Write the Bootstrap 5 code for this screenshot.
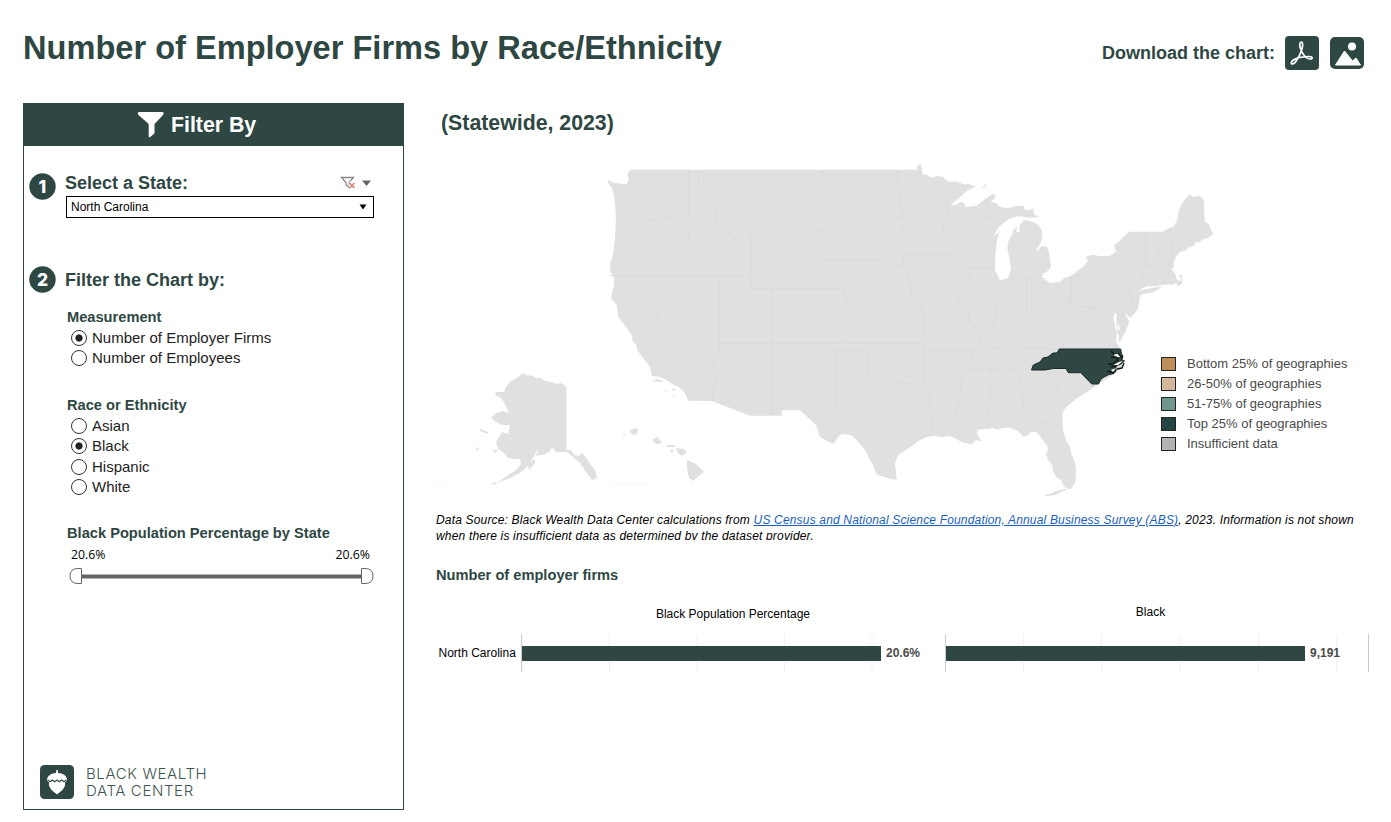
<!DOCTYPE html>
<html lang="en">
<head>
<meta charset="utf-8">
<meta name="viewport" content="width=device-width, initial-scale=1">
<title>Number of Employer Firms by Race/Ethnicity</title>
<link href="https://cdn.jsdelivr.net/npm/bootstrap@5.3.0/dist/css/bootstrap.min.css" rel="stylesheet">
<style>
:root{--pine:#2e4743}
body{font-family:"Liberation Sans",Arial,sans-serif;color:#000;background:#fff;width:1391px;height:822px;overflow:hidden;line-height:1}
svg{display:block;flex:none}
.pine{color:var(--pine)}
.topbar{height:103px;padding:0 27px 0 23px}
.topbar h1{font-size:32.6px;font-weight:700;margin:31px 0 0;line-height:33px}
.downloads{height:34px;margin-top:36px;font-size:18px;font-weight:700}
.filters{width:381px;height:707px;margin-left:23px;border:1px solid var(--pine)}
.filters-head{height:42px;background:var(--pine);color:#fff;font-size:21.3px;font-weight:700;padding-left:113px}
.step{height:27px;padding-left:5px;font-size:18px;font-weight:700}
.state-select{margin-left:42px;width:308px;height:22px;border:1px solid #000;font-size:12px;padding:0 6px 0 4px}
.group{margin-left:43px}
.group h2{font-size:14.65px;font-weight:700;line-height:16px;margin:0}
.choice{height:20.5px;font-size:15px;line-height:15px;color:#222;gap:5px;padding-left:4px}
.choice input{appearance:none;width:16px;height:16px;border:1px solid #333;border-radius:50%;margin:0;background:#fff}
.choice input:checked{background:radial-gradient(circle,#222 3.2px,#fff 4px)}
.choice span{padding-bottom:1px}
.ends{width:303px;font:12.3px/14px "Open Sans",sans-serif;padding-left:4px}
.logo-text{font-family:Inter,sans-serif;font-weight:300;font-size:15px;line-height:17px;color:#3f5551;letter-spacing:.62px}
.content{width:933px;margin-left:32px}
.content h2{font-size:21.3px;font-weight:700;line-height:22px;margin:9px 0 0 5px}
.mapbox{height:351px;margin-top:16px}
.legend{position:absolute;left:725px;top:204px;font-size:13px;color:#4a4a4a}
.legend div{height:19.9px;gap:11px}
.legend i{width:15px;height:14px;border:1.5px solid #222}
.note{font-size:12px;font-style:italic;line-height:16px;height:28px;margin-top:11px;overflow:hidden;letter-spacing:.172px;white-space:nowrap}
.note a{color:#1b5fb8}
.content h3{font-size:14.65px;font-weight:700;line-height:16px;margin:27px 0 0}
.chart{display:grid;grid-template-columns:85px 424px 424px;grid-template-rows:51px 38px;font-size:12px}
.plot{border-left:1px solid #ccc}
.plot b{color:#4a4a4a;margin-left:5px}
.bar{height:15px;width:359px;background:var(--pine)}
.p1{background:linear-gradient(90deg,#f0f0f0 1px,transparent 1px) 87px 0/87.5px 100%}
.p2{background:linear-gradient(90deg,#f0f0f0 1px,transparent 1px) 77px 0/78.3px 100%;border-right:1px solid #ccc}
</style>
</head>
<body>
<header class="topbar d-flex justify-content-between align-items-start">
  <h1 class="pine">Number of Employer Firms by Race/Ethnicity</h1>
  <div class="downloads pine d-flex align-items-center">
    <span>Download the chart:</span>
    <svg class="ms-2" width="36" height="34" viewBox="0 0 36 34"><rect x="2" width="34" height="34" rx="4" fill="#2e4743"/><path d="M17.500 6.500c2.500-1.500 2.500 3 1.500 6.500-1.500 5-4 9.500-6.500 13-1.500 2.200-4.500 2.500-4.300.8.300-2.800 6.300-5 11.300-5.800 4.500-.7 9.500-.9 9.700.8s-4 1.700-6.700-.8c-4.500-4.500-7-12.500-5-14.500Z" fill="none" stroke="#fff" stroke-width="1.700"/></svg>
    <svg class="ms-2" width="37" height="32" viewBox="0 0 37 32"><rect x="3" width="34" height="32" rx="5" fill="#2e4743"/><circle cx="25" cy="9.500" r="4" fill="#fff"/><path d="m8.500 28 9-14 8 10 3.500-3 4.500 7Z" fill="#fff" stroke="#fff" stroke-linejoin="round"/></svg>
  </div>
</header>
<div class="d-flex">
<aside class="filters d-flex flex-column">
  <div class="filters-head d-flex align-items-center">
    <svg width="28" height="28" viewBox="0 0 28 28"><path d="M1.500 1h24.500q1.500 1.500 0 3l-8.500 9v9.500l-5 4q-.8 0-.8-1.500V13L1.500 4Q0 2 1.500 1Z" fill="#fff"/></svg>
    <span style="margin:2px 0 0 6px">Filter By</span>
  </div>
  <div class="step pine d-flex" style="margin-top:27px">
    <svg width="27" height="27" viewBox="0 0 27 27"><circle cx="13.500" cy="13.500" r="13.200" fill="#2e4743"/><text x="13.300" y="19.700" text-anchor="middle" fill="#fff" font-family="Inter" font-weight="800" font-size="17.500">1</text></svg>
    <span style="margin:1px 0 0 9px">Select a State:</span>
    <svg style="margin:2px 0 0 152px" width="34" height="16" viewBox="0 0 34 16"><path d="M1.500 2.500h12L9 7.500v5L6 10V7.500Z" fill="none" stroke="#888" stroke-width="1.300"/><path d="m9.500 7.500 5.500 5.500m0-5.500L9.500 13" stroke="#fff" stroke-width="4"/><path d="m9.500 8 5 5m0-5-5 5" stroke="#dc7b76" stroke-width="1.600"/><path d="M22 5.500h9l-4.500 5.500Z" fill="#666"/></svg>
  </div>
  <div class="state-select d-flex align-items-center justify-content-between" style="margin-top:-4px"><span>North Carolina</span><svg width="8" height="6" viewBox="0 0 8 6"><path d="M.5.500h7L4 5.500Z"/></svg></div>
  <div class="step pine d-flex" style="margin-top:48px">
    <svg width="27" height="27" viewBox="0 0 27 27"><circle cx="13.500" cy="13.500" r="13.200" fill="#2e4743"/><text x="13.500" y="19.700" text-anchor="middle" fill="#fff" font-family="Inter" font-weight="800" font-size="17.500">2</text></svg>
    <span style="margin:5px 0 0 9px">Filter the Chart by:</span>
  </div>
  <div class="group" style="margin-top:16px">
    <h2 class="pine mb-1">Measurement</h2>
    <label class="choice d-flex align-items-center" style="margin-top:-1.500px"><input type="radio" name="m" checked><span>Number of Employer Firms</span></label>
    <label class="choice d-flex align-items-center"><input type="radio" name="m"><span>Number of Employees</span></label>
  </div>
  <div class="group" style="margin-top:28.500px">
    <h2 class="pine mb-1">Race or Ethnicity</h2>
    <label class="choice d-flex align-items-center" style="margin-top:-1.700px"><input type="radio" name="r"><span>Asian</span></label>
    <label class="choice d-flex align-items-center"><input type="radio" name="r" checked><span>Black</span></label>
    <label class="choice d-flex align-items-center"><input type="radio" name="r"><span>Hispanic</span></label>
    <label class="choice d-flex align-items-center"><input type="radio" name="r"><span>White</span></label>
  </div>
  <div class="group" style="margin-top:27.700px">
    <h2 class="pine">Black Population Percentage by State</h2>
    <div class="ends d-flex justify-content-between" style="margin-top:7px"><span>20.6%</span><span>20.6%</span></div>
    <svg style="margin:6px 0 0 2px" width="305" height="17" viewBox="0 0 305 17"><path d="M12 8.500h281" stroke="#666" stroke-width="4"/><path d="M12.500.500v15H9q-8 0-8-7.500t8-7.500ZM292.500.500v15h3.500q8 0 8-7.500t-8-7.500Z" fill="#fff" stroke="#666"/></svg>
  </div>
  <div class="mt-auto d-flex align-items-center" style="margin:0 0 10px 16px">
    <svg width="34" height="34" viewBox="0 0 34 34"><rect width="34" height="34" rx="4.500" fill="#2e4743"/><path d="M16 8q.5-1 0-2.500l2-.5-.2 3q8 .5 9.200 6l-1 3H8l-1-3q1.500-5.500 9-6Z" fill="#fff"/><path d="M9 16.500h16q1 6.500-5 10.500l-3 2.500-3-2.500q-6-4-5-10.500Z" fill="#fff"/><path d="m8 15 2 1.800 2.300-1.800 2.300 1.800 2.400-1.800 2.300 1.800 2.400-1.800 2.300 1.800 2-1.800" fill="none" stroke="#2e4743" stroke-width="1.100"/></svg>
    <div class="logo-text" style="margin:1px 0 0 12px">BLACK WEALTH<br>DATA CENTER</div>
  </div>
</aside>
<main class="content">
  <h2 class="pine">(Statewide, 2023)</h2>
  <div class="mapbox position-relative">
    <svg width="800" height="350" viewBox="436 150 800 350">
      <g fill="#e0e0e0">
      <path d="M630 169.800H917.300V165L921 164.500 922.700 174.300 927 175 931.700 177.700 937 176 943.300 177 946 180 950 181.700 957 181.500 963.300 184.300 968 184 976 186.300 971 189 966.700 191 960 197 950 205.700 956 204.500 961.700 201.700 964 203 966 207 976.700 205.700 985 199 991.700 194.300 995.700 195 994 199 990.700 201.700 996 203 999 206 1003.300 207.700 1009 208 1015 206 1023.300 205.700 1025 210 1030 210 1033.300 208.300 1034 214.300 1039.300 217 1028.300 217.700 1022 216.500 1016.700 216.300 1010 218.300 1003.300 223.300 998 228 993.300 237 1000 231 997 240 995.300 255 995 270 1000 280.300 1008.300 277.700 1011 268.300 1010 262 1007.300 248.300 1008 242 1011.700 235 1014 229 1017.300 226.700 1016 232 1019.300 232.300 1020 225 1024 220 1033.300 221.700 1038 225 1041.700 230 1042.300 238.300 1040 244 1036 250 1038 251 1041.700 245.700 1046.700 246.700 1049 252 1050 258.300 1051 266.700 1048 271 1043.300 273.300 1041.700 279 1046 280 1050 283 1060 281.700 1064 278 1071.700 275.700 1077 271 1083.300 266.700 1088 261 1085.700 256.700 1092 255 1100 256 1110 255.700 1116 251.700 1114 245.700 1129.300 231.700H1163.300L1167 229 1173.300 226.700 1177 221 1178.300 213.300 1180 207 1183.300 201.700 1189.300 194.300 1193.300 197 1200 195.700 1204 201 1204.700 221.700 1209.300 224.300 1210 228 1213.300 234.300 1208 238 1203 239 1200 242 1196 242 1193.300 246 1189 247 1187 250 1180 251.700 1176 257 1173.300 263.300 1174 266 1171.700 270 1175 273 1177 280 1181 281 1181 278 1179 275 1182 275 1182 284 1178 286 1176 283 1172 285 1166.700 284.300 1157 286 1146.700 286.300 1141 289 1138.300 291 1147 289 1156 287 1162 287 1154 292 1140 295 1139.300 301.700 1137.300 310 1133 315 1130 318.300 1128 315 1125 313.300 1129.300 321.700 1126 330 1121 340 1118 342 1119 336 1117 332 1120 329 1117 322 1117 313 1115 313 1113.300 318.300 1115 325 1116 331.700 1117 337 1116 341 1118 345 1120.700 349.300 1122 368 1114 374 1098.300 384.300 1085 393.300 1076 399 1066.700 406.700 1063 412 1062.300 417.300 1063.300 431.700 1066 440 1070 446.700 1071 453 1075.300 463.300 1076 471 1075.300 481.700 1072 488 1069.300 489.300 1064 486.700 1061 480 1057 478 1053.300 471.700 1052 465 1048 460 1046 454 1048 449 1046.700 445 1042 439 1036.700 431.700 1031 432 1028 435 1023.300 436.700 1020 433 1016 430 1010 427.700 1003 428 997 430 993.300 427.700 989 429 984 429 978 430 977 434 981.700 441.700 976 440 972 444 963.300 442.700 958 440 950 436 942 437 933.300 436 927 437 920 440 912 446 898.300 455 895 463.300 896.700 480 887 478 876.700 474.300 873 465 870 460 865 450 858.300 441.700 851.700 435.300 841.700 434 838 437 834 444 827 441 820 436.700 816 425 800 410.300H781.700V415.700H750L711.700 401 688.300 400.700 685 393 678.300 386.700 672 384 666.700 380 660 377 651.700 375.700 650 366.700 643 358 637.300 350 636 344 633 342 631.700 335 626 327 618.300 316.700 616.700 305 611.300 298.300 612 293 614 286 614 278.300 610.500 272 610 264 613 255 615 238.300 616 215 614 195 612 188 608 183 608 180 615 183 626.700 184.300 629 178 627 175Z"/>
      <path d="m981 188 7-5-3 4-5 2ZM1044 495l5-1 7-3 9-2 3 0-7 3-6 3-8 1ZM1119 360l4-3Z"/>
      <path d="M523 373 528 376 531 375 536 378 541 378 545 381 551 382 557 384 561 383 566.500 387V450L571 450 574 455 579 456 582 453 587 459 590 464 595 470 597 478 592 480 586 472 580 463 573 457 567 452 560 452 556 452 552 447 549 452 543 455 540 455 536 456 539 447 534 456 530 463 524 470 518 474 510 478 502 481 492 486 500 481 508 475 516 470 521 464 520 459 514 459 508 458 504 453 498 449 496 442 502 432 508 434 510 425 502 425 496 422 491 418 496 413 503 411 509 413 506 406 501 398 495 395 496 392 504 392 506 387 511 381 517 378Z"/>
      <path d="m528 464 7-5 0 4-6 7ZM480 429l8 3 0 2-8-3ZM476 447l3 2-1 2-2-2ZM492 450l6 0-2 3ZM491 484l7-3-5 4ZM630 430l6-2 2 3-2 4-5-1ZM623 435l3-3-2 4ZM652 440l5-3 5 6-6 1ZM667 445h8v2h-8ZM671 449l3 2-3 2ZM676 448l7 1 4 3-5 4-4-3ZM687 460l9 4 8 8-5 4-6 5-4-3-2-10ZM652 381l5-2 7 2-5 1ZM665 390l3 2-2 0ZM672 388l4 2-3 1ZM672 394l4 4-3-2Z"/>
      <path opacity=".3" d="M436 484h8v1h-8ZM611 484h37v1h-37Z"/>
      </g>
      <g fill="none" stroke="#dadada" stroke-width=".9">
      <path d="M615 213 625 218 630 223 650 221 667 217 688 217 693 221 688 235V275.500M688.500 170V217M698.500 170V184L705 194 716 207V223L721 222 732 239 745 239 748 235 751 231H823M822.500 170V288.500M751 231V275.500M610 275.500H751V288.500H845V302.500H913M657.500 275.500V318L710 365 717 378 713 390 712 401M719.500 275.500V354L714 356 713 366M719 343.500H922M771.500 288.500V415M845 302.500V343M824 217.500H903M824 260.500H880L890 265 903 267M897 170 899 190 903 217 901 222 904 229V254L903 265 909 279 912 295 921 307 923 315V350L925 385M904 254H956M911 295H956M835.500 350V407H800M835 350H867.500V375L880 379 888 382 900 384 912 383 922 386 929 388M923 350H974M928 387V394H957M929 394V408L933 416 932 433M949 205 948 216 943 223 944 235 953 244 959 253 960 262 969 269 970 276 962 284 957 294 960 303 969 312 968 320 978 329 981 340 974 351 969 369 961 380 960 393 957 408 954 419H974L975 427M963 267.500H995M966 208 984 216 995 220M997 281V310L992 329 978 340M1026.500 279V314M1008 278.500H1045M1071.500 275V307H1127M1073 276H1124L1131 283 1129 291 1133 301 1122 309M992 329 1005 331 1015 321 1027 314 1035 320 1046 320 1055 311 1067 304 1071 295M1046 320 1053 334 1062 338 1074 329 1085 312 1094 309 1087 307M1094 309 1102 317 1111 317M974 351 1000 348 1035 347.500 1056 349H1120M969 369 1031 370M991 370 989 410 988 428M1019 370 1024 410V419H997M1024 422 1055 423 1057 427M1045 370 1056 385 1065 404M1146 232V257L1144 275 1140 289M1157 264 1158 247 1166 230M1170 227 1172 258 1171 265M1145 265.500H1170M1145 275H1165V284M1117 308V333M1121 310 1127 323M1062 338 1045 347"/>
      </g>
      <path d="M1059.300 349H1120.700L1121.500 354 1123 356 1122 360 1124.500 361 1121 364 1116 366 1116 371 1114 373.500 1109 374.500 1104 377 1101 379 1098.500 384H1091.700L1080.700 372.700H1068.300L1066 368.500H1053.300L1045 370H1031.500L1033.300 365 1040 362 1043 358 1048 357 1053 353 1057 353Z" fill="#2e4743" stroke="#1c2a28" stroke-width="1"/>
      <path d="M1114 355q3-2 6 0l1 2h-6ZM1113 365l6-3 4-1-5 4ZM1111 370l5-2-3 4Z" fill="#fff"/>
      <path d="m1111 351 3 3m-3 3h5l2 3-5 4h-5m3 3 5-1m2-13 4 5M1107 371l7 2m3-4 5-1 2-5" fill="none" stroke="#111b19" stroke-width="1.500"/>
    </svg>
    <div class="legend">
      <div class="d-flex align-items-center"><i style="background:#bb8f57"></i>Bottom 25% of geographies</div>
      <div class="d-flex align-items-center"><i style="background:#d2b898"></i>26-50% of geographies</div>
      <div class="d-flex align-items-center"><i style="background:#6f978e"></i>51-75% of geographies</div>
      <div class="d-flex align-items-center"><i style="background:#244540"></i>Top 25% of geographies</div>
      <div class="d-flex align-items-center"><i style="background:#b3b3b3"></i>Insufficient data</div>
    </div>
  </div>
  <p class="note mb-0">Data Source: Black Wealth Data Center calculations from <a href="#">US Census and National Science Foundation, Annual Business Survey (ABS)</a>, 2023. Information is not shown<br>when there is insufficient data as determined by the dataset provider.</p>
  <h3 class="pine">Number of employer firms</h3>
  <div class="chart">
    <div></div>
    <div class="text-center" style="padding-top:25px">Black Population Percentage</div>
    <div class="text-center" style="padding:23px 13px 0 0">Black</div>
    <div class="d-flex align-items-center" style="padding-left:2.500px">North Carolina</div>
    <div class="plot p1 d-flex align-items-center"><div class="bar"></div><b>20.6%</b></div>
    <div class="plot p2 d-flex align-items-center"><div class="bar"></div><b>9,191</b></div>
  </div>
</main>
</div>
<script src="https://cdn.jsdelivr.net/npm/bootstrap@5.3.0/dist/js/bootstrap.bundle.min.js"></script>
</body>
</html>
